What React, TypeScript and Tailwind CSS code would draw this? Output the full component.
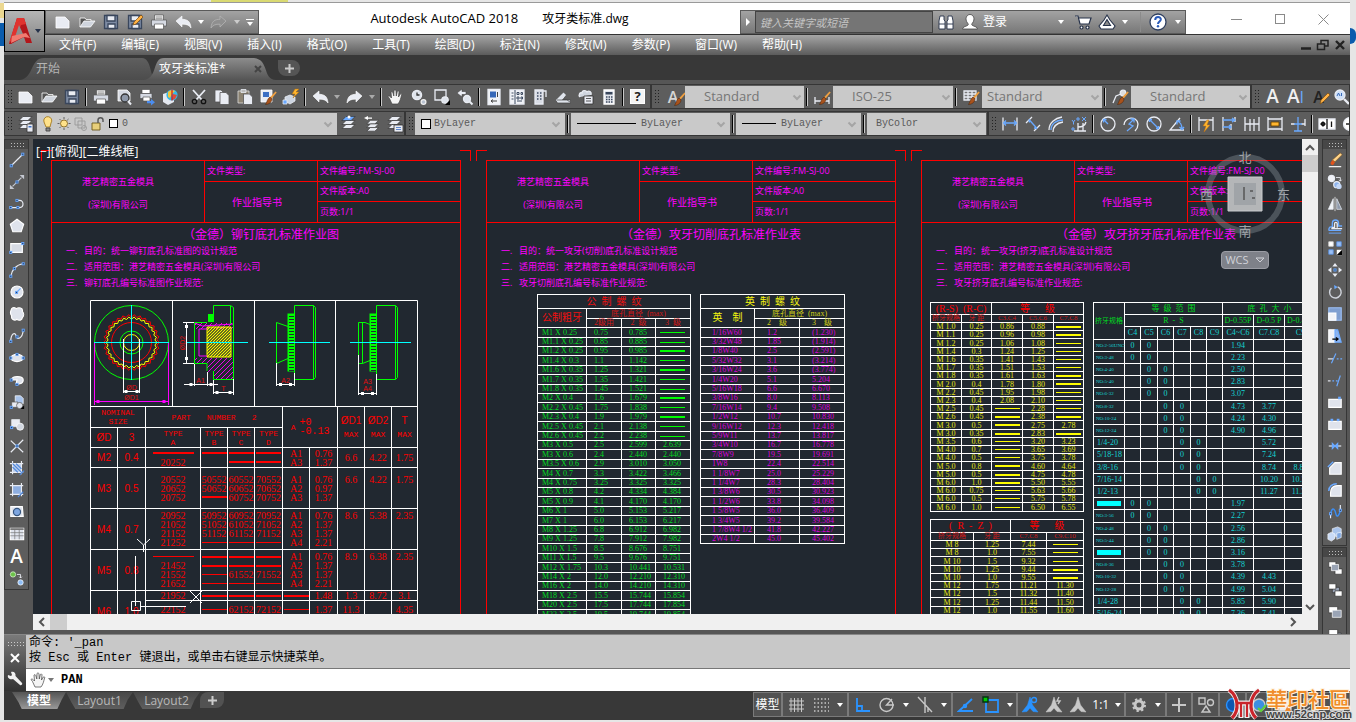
import React from 'react';

const UI = "font-['Open_Sans','Noto_Sans_CJK_SC',sans-serif]";
const CAD = "font-['Liberation_Serif','Noto_Sans_CJK_SC',serif]";

/* ---------- icons ---------- */

const BLUE = '#6aa9ff';
const LIGHT = '#e9ecf3';

const Ico: React.FC<{ children: React.ReactNode; size?: string }> = ({ children, size = 'h-[18px] w-[18px]' }) => (
  <svg viewBox="0 0 18 18" className={`${size} shrink-0`} fill="none" stroke={LIGHT} strokeWidth="1.3" aria-hidden="true">
    {children}
  </svg>
);

const Dot = ({ x, y }: { x: number; y: number }) => (
  <rect x={x - 1.2} y={y - 1.2} width="2.4" height="2.4" fill="#1f3b66" stroke={BLUE} strokeWidth="1" />
);

const Brush = () => (
  <g stroke="none">
    <path d="M16.5 3.5l1.2 1-5 6-1.6-1.2z" fill="#f0a040" />
    <path d="M11 9l2 1.8c0 3-2.500 5.500-6.500 5.700 1.500-2 1.500-5.500 4.500-7.500z" fill="#a8521c" stroke="#4a2208" strokeWidth=".5" />
  </g>
);

const Sheets = () => (
  <g fill={LIGHT} stroke="#333" strokeWidth=".7">
    <path d="M6 1.500h9l-4 4H2z" />
    <path d="M6 5.500h9l-4 4H2z" />
    <path d="M6 9.500h9l-4 4H2z" />
  </g>
);

const icons = {
  newFile: <path d="M2 4h9l4 4v7H2z" fill={LIGHT} stroke="#fff" strokeWidth=".8" />,
  open: (
    <g fill="#cfd4dd" stroke="#fff" strokeWidth=".8">
      <path d="M2 14V5h5l1 1.500h5V9" fill="#555" />
      <path d="M2 14l4-6h11l-4.500 6z" />
    </g>
  ),
  save: (
    <g stroke="#39465c">
      <path d="M2.500 2.500h13v13h-13z" fill="#7d8ba3" />
      <path d="M5 2.500h8V8H5z" fill={LIGHT} />
      <path d="M6 11h7v4.500H6z" fill={LIGHT} />
    </g>
  ),
  saveAs: (
    <g stroke="#39465c">
      <path d="M2.500 2.500h13v13h-13z" fill="#7d8ba3" />
      <path d="M5 2.500h8V8H5z" fill={LIGHT} />
      <path d="M6 11h7v4.500H6z" fill={LIGHT} />
      <path d="M7 12l1-3 7-7 2 2-7 7z" fill="#ffb347" stroke="#7a4a10" strokeWidth=".7" />
    </g>
  ),
  print: (
    <g stroke="#555" strokeWidth=".7">
      <path d="M4.500 2h9v6h-9z" fill="#fff" />
      <path d="M1.500 7h15v6h-15z" fill="#d5d9e2" />
      <path d="M4.500 11h9v5h-9z" fill="#fff" />
      <path d="M5.500 4h7M5.500 5.800h7" />
    </g>
  ),
  preview: (
    <g>
      <path d="M3 2h9l3 3v8H3z" fill="#d5d9e2" stroke="#fff" strokeWidth=".8" />
      <circle cx="10" cy="10" r="4" fill="#8d97a8" stroke="#333" />
      <path d="M13 13l3 3.500" strokeWidth="2" />
    </g>
  ),
  publish: (
    <g stroke="#555" strokeWidth=".7">
      <path d="M4 1.500h8v4H4z" fill="#fff" />
      <path d="M2 5.500h12v5H2z" fill="#d5d9e2" />
      <path d="M5 9h7v4H5z" fill="#fff" />
      <path d="M9 13h4v-2l4 3.300-4 3.200v-2.200H9z" fill="#4b8df0" stroke="none" />
    </g>
  ),
  globe: (
    <g stroke="none">
      <path d="M2 6l6-2 5 2v8l-6 3-5-3z" fill="#e4e8f0" />
      <circle cx="11" cy="7" r="5.600" fill="#35b8e8" />
      <path d="M7 4c2-2 5-2 7-1l-3 3-2 4-2-1z" fill="#f2c53d" />
      <path d="M12 6l4 1-2 4-3 1z" fill="#e04a3a" />
      <path d="M11 1.500v11" stroke="#d02020" />
    </g>
  ),
  cut: (
    <g>
      <path d="M3 2l9 10M15 2L6 12" strokeWidth="1.800" />
      <circle cx="4.500" cy="13.500" r="2.200" stroke="#111" />
      <circle cx="13.500" cy="13.500" r="2.200" stroke="#111" />
    </g>
  ),
  copy: (
    <g fill={LIGHT} stroke="#555" strokeWidth=".8">
      <path d="M2 2h6l3 3v9H2z" />
      <path d="M7 4.500h6l3 3v9H7z" />
    </g>
  ),
  paste: (
    <g strokeWidth=".8">
      <path d="M2 3h11v12H2z" fill="#8b8271" stroke="#ddd" />
      <path d="M5 1.500h5v3H5z" fill="#bbb" />
      <path d="M7.500 6h6l3 3v7.500h-9z" fill={LIGHT} stroke="#555" />
    </g>
  ),
  match: (
    <g>
      <path d="M2 2h11v12H2z" fill={LIGHT} stroke="#fff" strokeWidth=".8" />
      <path d="M4 4h6v5H4z" fill="#3c6fc4" stroke="none" />
      <Brush />
    </g>
  ),
  block: (
    <g strokeWidth=".8">
      <path d="M3 9l5-2 5 2v4l-5 3-5-3z" fill="#cdd5e2" />
      <path d="M1 12h4v4H1z" fill={BLUE} />
      <path d="M13 1l-3 5h3l-2 4 6-6h-3l3-3z" fill="#ffb52e" stroke="#a86a10" strokeWidth=".5" />
    </g>
  ),
  undo: <path d="M2 8l6-5v3.300c5 0 8.500 1.700 9 8.700-2-3-4.500-4-9-3.800V14z" fill={LIGHT} stroke="#fff" strokeWidth=".6" />,
  redo: <path d="M16 8l-6-5v3.300C5 6.300 1.500 8 1 15c2-3 4.500-4 9-3.800V14z" fill={LIGHT} stroke="#fff" strokeWidth=".6" />,
  redoOff: <path d="M16 8l-6-5v3.300C5 6.300 1.500 8 1 15c2-3 4.500-4 9-3.800V14z" fill="#8f8f8f" stroke="#b4b4b4" strokeWidth=".8" />,
  hand: (
    <path
      d="M5 16L2.500 10.500 1 8.500c1-1 2-.2 3.500 1.500L4 4c1-.8 1.600 0 2 1l.8 3L7 2.500c1-1 1.800-.5 2 .5l.3 5 1-4.500c.9-.9 1.800-.4 1.700.6L11.500 9l1.800-3c1-.5 1.700 0 1.300 1-.8 3-1.500 6.500-3.600 9z"
      fill="#f4f4f4"
      stroke="#444"
      strokeWidth=".7"
    />
  ),
  zoomRt: (
    <g>
      <circle cx="7" cy="7" r="4.600" fill="#dfe4ec" />
      <path d="M7 4.500V7h2.500" stroke="#333" />
      <circle cx="13.500" cy="14" r="2.400" fill="#b9c2d0" stroke="#eee" />
    </g>
  ),
  zoomWin: (
    <g>
      <path d="M2 2h11v10H2z" />
      <circle cx="12" cy="12" r="3.200" fill="#dfe4ec" />
      <path d="M17 12v5h-5z" fill="#000" stroke="none" />
    </g>
  ),
  zoomPrev: (
    <g>
      <path d="M1 5l5-4v2.500h4v3H6V9z" fill={LIGHT} stroke="#444" strokeWidth=".6" />
      <circle cx="11" cy="11" r="3.500" fill="#dfe4ec" />
      <path d="M13.500 13.500l3 3" strokeWidth="2" />
    </g>
  ),
  props: (
    <g>
      <path d="M3 1.500h12v15H3z" fill="#f1f3f7" />
      <path d="M5 3.500h6v6H5z" fill="#3668b8" stroke="none" />
      <path d="M12.500 4v5M6 13h6M6 13l2-1.500M6 13l2 1.500" stroke="#444" strokeWidth="1" />
    </g>
  ),
  design: (
    <g>
      <path d="M2 2h14v14H2z" fill="#f1f3f7" />
      <path d="M7 2v14M9 4.500h2v2H9zM13 4.500h1.500v2H13zM9 9h2v2H9zM13 9h1.500v2H13zM9 13h5M3.500 5h2M3.500 8h2M3.500 11h2" stroke="#3d4a61" strokeWidth="1" />
    </g>
  ),
  palette: (
    <g>
      <path d="M4 2h8v14H4z" fill="#d8dce5" />
      <path d="M6 5h1.500M9 5h1.500M6 8h1.500M9 8h1.500M6 11h1.500M9 11h1.500" stroke="#3d4a61" />
      <path d="M12 3h3v6" />
    </g>
  ),
  sheetSet: (
    <g fill="#dfe4ec" stroke="#444" strokeWidth=".7">
      <path d="M1.500 12l8-8 3 3-4 5h8v3h-13z" />
      <path d="M3 12h10l3 2" />
    </g>
  ),
  markup: (
    <g>
      <path d="M3 9c-2-2 0-5 2-4 0-3 4-3 5-1 2-2 5 0 4 3" fill="#cfd5df" />
      <path d="M7 8h9v8H7z" fill={LIGHT} stroke="#333" strokeWidth=".8" />
      <path d="M9 10.500h5M9 13h5" stroke="#333" strokeWidth=".8" />
    </g>
  ),
  calc: (
    <g>
      <path d="M4 2h10v14H4z" fill="#e4e7ee" stroke="#fff" />
      <path d="M5.500 4h7v2.500h-7z" fill="#39465c" stroke="none" />
      <path d="M6 9h1.500M8.500 9H10M11 9h1.500M6 11.500h1.500M8.500 11.500H10M11 11.500h1.500M6 14h1.500M8.500 14H10M11 14h1.500" stroke="#39465c" />
    </g>
  ),
  dim: (
    <g>
      <path d="M2 2.500v13M16 2.500v13" />
      <path d="M2.500 8h13M5 5.500L2.500 8 5 10.500M13 5.500L15.500 8 13 10.500" stroke={BLUE} />
    </g>
  ),
  dimBrush: (
    <g>
      <path d="M2 9v7M16 9v7M2 13h14" />
      <Brush />
    </g>
  ),
  tableBrush: (
    <g>
      <path d="M2 3h12v9H2zM2 6h12M2 9h12M6 3v9M10 3v9" fill="#777" />
      <Brush />
    </g>
  ),
  leaderBrush: (
    <g>
      <circle cx="12" cy="5" r="2.800" fill="#ddd" />
      <path d="M2 15l3-7 5-2" />
      <Brush />
    </g>
  ),
  aligned: (
    <g>
      <path d="M2 8l6-6M10 16l6-6" />
      <path d="M5 4.500l8 9M5 4.500l.5 3M13 13.500l-3-.5" stroke={BLUE} />
    </g>
  ),
  arcLen: (
    <g>
      <path d="M2 15C2 8 8 3 15 2M6 17C6 11 10 8 16 7" />
      <path d="M4 15c0-6 5-10 12-10" stroke={BLUE} />
    </g>
  ),
  ordinate: (
    <g>
      <path d="M8 8v8M8 12c4 0 7-1 8-5M4 16h12M13 8v8" />
      <path d="M2 5l1.500 2L5 5M3.500 7v2.500M12 2l4 4M16 2l-4 4M7 3h2v2H7zM2 13h2v2H2z" stroke={BLUE} strokeWidth="1" />
    </g>
  ),
  radius: (
    <g>
      <circle cx="9" cy="9" r="7" />
      <path d="M9 9L4.500 4.500M4.500 7.500v-3h3" stroke={BLUE} />
    </g>
  ),
  jogged: (
    <g>
      <path d="M2 10C2 2 15 0 16 9c0 3-1 5-3 7" />
      <path d="M5 16l6-5-4-2 5-5M8.500 4H12v3.500" stroke={BLUE} />
    </g>
  ),
  diameter: (
    <g>
      <circle cx="9" cy="9" r="7" />
      <path d="M4.500 4.500l9 9M4.500 7V4.500H7M13.500 11v2.500H11" stroke={BLUE} />
    </g>
  ),
  angular: (
    <g>
      <path d="M16 15H2L12 3" />
      <path d="M9 6c3 1 5 4 5 8M9 9.500V6h3.500M11.500 12l2.500 2.500 2-2.500" stroke={BLUE} />
    </g>
  ),
  quick: (
    <g>
      <path d="M2 2v14M16 2v14M2 5h14" />
      <path d="M10 5L6 11h3l-2 6 6-7h-3l2-5z" fill="#ffb52e" stroke="#c07010" strokeWidth=".5" />
    </g>
  ),
  baseline: (
    <g>
      <path d="M3 2v14M15 2v5M11 9v6" />
      <path d="M3 5h12M3 12h8M12 3l3 2-3 2M9 10l2 2-2 2" stroke={BLUE} />
    </g>
  ),
  contin: <path d="M2 2v14M7 4v12M11 4v12M16 2v14M2 9h14" />,
  space: (
    <g>
      <path d="M2 2v14M16 2v14M2 4h14M2 14h14" />
      <path d="M5 7h8v4H5z" fill="#ffb52e" stroke="#5a3a00" strokeWidth=".8" />
    </g>
  ),
  breakDim: (
    <g>
      <path d="M2 9h4M12 9h4M16 4v7" />
      <path d="M9 2v14M5 16h8M5 9h8" stroke={BLUE} />
    </g>
  ),
  tol: (
    <g>
      <path d="M1 4h16v10H1z" fill="#fff" />
      <path d="M9 4v10M2.500 9h5M5 6.500v5M13.500 6.500V12" stroke="#111" />
      <circle cx="5" cy="9" r="1.600" stroke="#111" />
    </g>
  ),
  center: (
    <g>
      <circle cx="9" cy="9" r="6.500" fill="#fff" />
      <path d="M9 5v8M5 9h8" stroke="#222" />
    </g>
  ),
  layers: (
    <g>
      <Sheets />
      <path d="M10 9h6v8h-6z" fill={LIGHT} stroke="#333" strokeWidth=".8" />
      <path d="M11.500 11h3v1.500h-3z" fill="#3c6fc4" stroke="none" />
    </g>
  ),
  layerIso: (
    <g>
      <Sheets />
      <path d="M6 1.500h9l-4 4H2z" fill={BLUE} stroke="#333" strokeWidth=".6" />
      <circle cx="9" cy="2" r="1.500" fill="#fff" stroke="none" />
    </g>
  ),
  layerPrev: (
    <g>
      <g transform="translate(2 4) scale(.9)">
        <Sheets />
      </g>
      <path d="M1 3l4-2v1.500h4v1.300H5V5z" fill="#fff" stroke="none" />
    </g>
  ),
  layerState: (
    <g>
      <Sheets />
      <path d="M8 10h9v7H8z" fill={LIGHT} stroke="#333" strokeWidth=".8" />
      <path d="M10 12.500h5M10 14.500h5" stroke="#3c6fc4" strokeWidth=".8" />
    </g>
  ),
  find: (
    <g>
      <circle cx="7" cy="7" r="5" fill="#cfe0f7" />
      <path d="M11 11l5 5" strokeWidth="2.400" />
      <path d="M4 8l1.500-3L7 8M8.500 5v3" stroke="#3668b8" strokeWidth="1" />
    </g>
  ),
  line: (
    <g>
      <path d="M2.500 15.500l13-13" />
      <Dot x={2.5} y={15.5} />
      <Dot x={15.5} y={2.5} />
    </g>
  ),
  xline: (
    <g>
      <path d="M4 14L14 4" stroke="#c5c9d2" />
      <path d="M1 12v5h5zM12 1h5v5z" fill="#c5c9d2" stroke="none" />
      <Dot x={9} y={9} />
    </g>
  ),
  pline: (
    <g>
      <path d="M2 13h10c5 0 5-8 0-8H9" />
      <Dot x={2} y={13} />
      <Dot x={9} y={5} />
      <Dot x={10} y={13} />
    </g>
  ),
  polygon: <path d="M9 1.500L16.500 7l-2.800 8.500H4.300L1.500 7z" fill="#dfe3ec" stroke="#fff" />,
  rect: (
    <g>
      <path d="M2 4h13v10H2z" fill="#d7dbe4" stroke="#fff" />
      <Dot x={2} y={14} />
      <Dot x={15.5} y={4} />
    </g>
  ),
  arc: (
    <g>
      <path d="M2 16C3 9 8 3 16 2" />
      <Dot x={2} y={16} />
      <Dot x={6} y={7.5} />
      <Dot x={16} y={2} />
    </g>
  ),
  circle: (
    <g>
      <circle cx="9" cy="9" r="6.800" fill="#dfe3ec" stroke="#fff" />
      <path d="M9 9l4-4" stroke={BLUE} />
      <Dot x={8.5} y={9.5} />
    </g>
  ),
  cloud: <path d="M3 3c2-2 4-1 5 0 3-2 8-1 7 3 2 2 2 5 0 7 0 3-4 4-6 2-3 2-7 0-6-4-2-2-1-6 0-8z" fill="#dfe3ec" stroke="#fff" />,
  spline: (
    <g>
      <path d="M2 15c0-9 5-11 6-6s7 3 8-6" />
      <Dot x={2} y={15} />
      <Dot x={9} y={10} />
      <Dot x={16} y={2.5} />
    </g>
  ),
  ellipse: (
    <g>
      <ellipse cx="9" cy="9" rx="7" ry="4" fill="#dfe3ec" stroke="#fff" />
      <Dot x={2} y={9} />
      <Dot x={16} y={9} />
      <Dot x={9} y={5} />
    </g>
  ),
  ellArc: (
    <g>
      <path d="M3 9c0-5 13-5 13 0s-7 5-8 4l1-4z" fill="#dfe3ec" stroke="#fff" />
      <Dot x={2.5} y={9} />
      <Dot x={9} y={14} />
    </g>
  ),
  insert: (
    <g strokeWidth=".8">
      <path d="M7 2h6l3 3v6H7z" fill="#a9c4ec" stroke="#fff" />
      <path d="M3 9h7v6H3z" fill={LIGHT} stroke="#555" />
      <circle cx="12" cy="13" r="3.500" fill="#dfe3ec" stroke="#555" />
      <path d="M17 13v4h-4z" fill="#000" stroke="none" />
      <Dot x={2.5} y={15} />
    </g>
  ),
  mkBlock: (
    <g strokeWidth=".8">
      <path d="M3 4h9v8H3z" fill={LIGHT} />
      <circle cx="12.500" cy="12" r="4" fill="#d2d7e0" stroke="#fff" />
      <Dot x={3} y={13} />
    </g>
  ),
  point: (
    <g>
      <path d="M2 3l14 13M16 2L2 16" />
      <Dot x={9} y={9} />
    </g>
  ),
  hatch: (
    <g>
      <path d="M4 4h10v10H4z" fill="#b9cdec" stroke="none" />
      <path d="M4 1v15M14 1v15M1 4h15M1 14h15" />
      <path d="M4 8l6 6M4 4l10 10M8 4l6 6M12 17l5-5" stroke="#4d86dc" />
    </g>
  ),
  gradient: (
    <g>
      <path d="M4 4h10v10H4z" fill="#8eaee0" stroke="none" />
      <path d="M4 1v15M14 1v15M1 4h15M1 14h15" />
      <path d="M10 17l6-6" stroke="#4d86dc" />
    </g>
  ),
  region: (
    <g>
      <path d="M2 3h13l1 11H2z" fill="#dfe3ec" stroke="#fff" />
      <circle cx="9" cy="9" r="4" fill="#7ea6e0" stroke="#35557f" />
    </g>
  ),
  table: (
    <g>
      <path d="M1.500 2.500h15v13h-15z" fill="#dfe3ec" stroke="#fff" />
      <path d="M1.500 3.500h15" stroke="#777" strokeWidth="2" />
      <path d="M1.500 7.500h15M1.500 11h15M6.500 4v11M11.500 4v11" stroke="#777" strokeWidth=".8" />
    </g>
  ),
  addSel: (
    <g>
      <circle cx="4.500" cy="5" r="3" fill="#6cc24a" stroke="#e0f5d5" strokeWidth=".8" />
      <path d="M9 5h4v4M11.500 7.500L13 9l1.500-1.500" strokeWidth="1" />
      <circle cx="13" cy="14" r="3" fill="#8ebdf5" stroke="#fff" strokeWidth=".8" />
    </g>
  ),
  erase: (
    <g>
      <path d="M2 16.500h14" stroke="#fff" />
      <path d="M15 1l2 2-8 8-3-2z" fill="#ffd58a" stroke="#8a5a20" strokeWidth=".7" />
      <path d="M6 9l3 2.500-2 3c-2 .5-3-.5-3-2z" fill="#e2541c" stroke="none" />
    </g>
  ),
  copyObj: (
    <g>
      <circle cx="5" cy="5" r="3.500" fill="#f1f3f7" />
      <path d="M10 4h5v4M13.500 6.500L15 8l1.500-1.500" strokeWidth="1" />
      <circle cx="11" cy="12" r="3.500" fill="#8eb4ee" />
      <circle cx="13.500" cy="14" r="3" fill="#c3d7f7" stroke="none" />
    </g>
  ),
  mirror: (
    <g strokeWidth=".8">
      <path d="M7 3v12H1.500z" fill="#f1f3f7" />
      <path d="M11 3v12h5.500z" fill="#8e99ab" />
      <path d="M9 1v16" stroke="#fff" />
    </g>
  ),
  offset: (
    <g strokeWidth="1.500">
      <path d="M2 14h14M2 14c0-5 3-4 4-4V6c0-5 7-5 7 0v3h4" stroke={BLUE} />
      <path d="M5 12h12M5 12c1-2 2-1 3.500-1.500V6.500c0-2 3-2 3 0V11" />
      <path d="M2 17h14" stroke={BLUE} strokeWidth="1" />
    </g>
  ),
  array: (
    <g strokeWidth=".9">
      <path d="M2 2h5v5H2z" fill="#fff" stroke="#ddd" />
      <path d="M11 2h5v5h-5zM2 11h5v5H2z" fill="#9cc0f5" stroke="#5a95ea" />
      <path d="M11 11h6v6h-6z" fill="#fff" stroke="none" />
      <path d="M17 11v6h-6z" fill="#000" stroke="none" />
    </g>
  ),
  move: (
    <g>
      <path d="M9 1l3 4H6zM9 17l3-4H6zM1 9l4-3v6zM17 9l-4-3v6z" fill={LIGHT} stroke="none" />
      <Dot x={9} y={9} />
    </g>
  ),
  rotate: (
    <g>
      <path d="M5 4.500a6.500 6.500 0 1 0 7-1.200" stroke="#d0d4dc" strokeWidth="1.600" />
      <path d="M8 1l4 2.300L8.500 6z" fill={BLUE} stroke="none" />
    </g>
  ),
  scale: (
    <g>
      <path d="M2 2h14v14H2z" fill="#7f9fd0" stroke="#9cc0f5" />
      <path d="M2 8h8v8H2z" fill="#f1f3f7" stroke="#fff" />
    </g>
  ),
  stretch: (
    <g>
      <path d="M2 2h7v14H2z" fill="#f1f3f7" stroke="#fff" />
      <path d="M9 2h3l4 14H9z" fill="#8eb4ee" stroke={BLUE} />
      <path d="M6 12.500h6M10 10.500l2.500 2L10 14.500" stroke="#000" />
    </g>
  ),
  trim: (
    <g>
      <path d="M1 10h6" />
      <path d="M5 15l5-11M11 10h2M15 10h2" stroke={BLUE} />
    </g>
  ),
  extend: (
    <g>
      <path d="M1 10h3" />
      <path d="M6 10h2M10 10h2M11 16l4-12" stroke={BLUE} />
    </g>
  ),
  breakPt: (
    <g>
      <path d="M2 6h14v9H2z" fill="#dfe3ec" stroke="#fff" />
      <path d="M12.500 3h3v3h-3z" fill={BLUE} stroke="none" />
    </g>
  ),
  breakObj: (
    <g>
      <path d="M2 6h14v9H2z" fill="#dfe3ec" stroke="#fff" />
      <path d="M4 3h3v3H4zM11 3h3v3h-3z" fill={BLUE} stroke="none" />
    </g>
  ),
  join: (
    <g>
      <path d="M2 9h14" />
      <path d="M6 6l3 3-3 3zM12 6L9 9l3 3z" fill={BLUE} stroke={BLUE} />
    </g>
  ),
  chamfer: (
    <g>
      <path d="M3 16V9l6-6h7v13z" fill="#dfe3ec" stroke="#fff" />
      <path d="M1 8l6-6" stroke={BLUE} strokeWidth="1.600" />
    </g>
  ),
  fillet: (
    <g>
      <path d="M4 16v-4c0-5 3-8 8-8h4v12z" fill="#dfe3ec" stroke="#fff" />
      <path d="M2 10c0-5 4-8 9-8" stroke={BLUE} strokeWidth="1.600" />
    </g>
  ),
  blend: (
    <g>
      <path d="M4 10v6M15 1v8" />
      <path d="M4 11c2-9 5-5 6 0s4 2 5-4" stroke="#3b8ef5" strokeWidth="1.600" />
      <Dot x={4} y={11} />
      <Dot x={15} y={7} />
    </g>
  ),
  explode: (
    <g strokeWidth=".7">
      <path d="M6 3l6-2 4 2v6l-5 3-5-2z" fill="#a9c4ec" stroke="#fff" />
      <path d="M1 9l4-2 4 2v5l-4 3-4-2z" fill="#c9daf5" stroke="#fff" />
      <path d="M11 8l5-1v6l-5 2z" fill="#7ea6e0" stroke="#fff" />
    </g>
  ),
  order1: (
    <g stroke="#333" strokeWidth=".8">
      <path d="M2 2h8v6H2zM9 10h8v6H9z" fill="#fff" />
      <path d="M5 5h8v7H5z" fill="#9aa4b5" stroke="#fff" />
    </g>
  ),
  order2: (
    <g stroke="#333" strokeWidth=".8">
      <path d="M6 6h8v6H6z" fill="#9aa4b5" />
      <path d="M2 2h8v6H2zM9 10h8v6H9z" fill="#fff" />
    </g>
  ),
  order3: (
    <g stroke="#333" strokeWidth=".8">
      <path d="M2 3h10v7H2z" fill="#fff" />
      <path d="M6 7h10v8H6z" fill="#9aa4b5" stroke="#fff" />
    </g>
  ),
  order4: (
    <g stroke="#333" strokeWidth=".8">
      <path d="M6 8h10v8H6z" fill="#9aa4b5" />
      <path d="M2 4h10v8H2z" fill="#fff" />
    </g>
  ),
  binoc: (
    <g fill="#fff" stroke="#26324a" strokeWidth=".9">
      <path d="M3 3h4v4l1 1v8H2V8zM15 3h-4v4l-1 1v8h6V8z" />
      <path d="M2 11h6M10 11h6" />
    </g>
  ),
  user: (
    <g fill="#fff" stroke="#444" strokeWidth=".8">
      <path d="M1.500 16c0-2 3-2.500 5-3.500 1-.5 1-1.500 0-2.500-3-4-1-8.500 2.500-8.500S14.500 6 11.500 10c-1 1-1 2 0 2.500 2 1 5 1.500 5 3.500z" />
    </g>
  ),
  cart: (
    <g stroke="#26324a" strokeWidth="1.200">
      <path d="M1 3h3l2 8h9l2-6H5" fill="#fff" />
      <circle cx="7.500" cy="14.500" r="1.500" fill="#fff" />
      <circle cx="13.500" cy="14.500" r="1.500" fill="#fff" />
    </g>
  ),
  a360: (
    <g stroke="#26324a" strokeWidth="1.100" fill="#fff">
      <path d="M9 2l3 5 5 6-2 3H3l-2-3 5-6z" />
      <path d="M9 6.500l3.500 6h-7z" fill="#888" />
    </g>
  ),
  help: (
    <g>
      <circle cx="9" cy="9" r="8" fill="#fff" stroke="#2f3f5f" />
      <path d="M6.200 7c0-4 6-3.700 5.600-.3C11.500 8.500 9 8.600 9 11" stroke="#2a5ab8" strokeWidth="2" />
      <circle cx="9" cy="13.300" r="1.200" fill="#2a5ab8" stroke="none" />
    </g>
  ),
};

type IconName = keyof typeof icons;

const Tool = ({ name, label }: { name: IconName; label?: string }) => (
  <button type="button" aria-label={label ?? name} className="flex h-full w-[23px] shrink-0 items-center justify-center">
    <Ico>{icons[name]}</Ico>
  </button>
);

const Tri = ({ color = 'border-t-white' }: { color?: string }) => (
  <span className={`h-0 w-0 shrink-0 border-x-[3px] border-t-4 border-x-transparent ${color}`} />
);

const Chevron = ({ d, className }: { d: string; className?: string }) => (
  <svg viewBox="0 0 10 10" className={`h-2.5 w-2.5 ${className ?? ''}`} fill="none" stroke="currentColor" strokeWidth="2" aria-hidden="true">
    <path d={d} />
  </svg>
);

const Sep = () => <span className="mx-0.5 h-[18px] w-0.5 shrink-0 border-r border-[#c8c8c8] bg-black" />;
const Drop = () => (
  <button type="button" aria-label="more" className="flex w-3 shrink-0 items-center justify-center">
    <Tri color="border-t-[#aaa]" />
  </button>
);
const Grip = () => (
  <span className="mr-px h-4 w-[6px] shrink-0 bg-[radial-gradient(#222_1px,transparent_1px)] bg-[size:3px_3px]" />
);

const Bar: React.FC<{ children: React.ReactNode; className?: string }> = ({ children, className = '' }) => (
  <div role="toolbar" className={`flex h-[25px] shrink-0 items-center border border-[#363636] bg-[#5d5d5d] ${className}`}>
    {children}
  </div>
);

/* ---------- top of the window ---------- */

const TitleBar = () => (
  <div className="flex h-[31px] items-end bg-white pl-[41px]">
    <div className="flex h-6 w-[214px] shrink-0 items-center justify-between border border-[#5a5a5a] bg-linear-to-b from-[#a3a3a3] to-[#787878] pr-1 pl-2">
      {(['newFile', 'open', 'save', 'saveAs', 'print', 'undo'] as IconName[]).map((n) => (
        <button key={n} type="button" aria-label={n}>
          <Ico>{icons[n]}</Ico>
        </button>
      ))}
      <Tri />
      <button type="button" aria-label="redo">
        <Ico>{icons.redoOff}</Ico>
      </button>
      <Tri color="border-t-[#ccc]" />
      <span className="flex flex-col items-center gap-0.5">
        <span className="h-px w-2 bg-white" />
        <Tri />
      </span>
    </div>
    <h1 className="flex h-full flex-1 items-center justify-center gap-6 text-[12px] text-black">
      <span className="text-[13px]">Autodesk AutoCAD 2018</span>
      <span>攻牙类标准.dwg</span>
    </h1>
    <div className="flex h-6 w-[446px] shrink-0 items-center border border-[#5a5a5a] bg-linear-to-b from-[#a3a3a3] to-[#787878] text-[12px] text-white">
      <button type="button" aria-label="collapse search" className="flex w-[14px] justify-center">
        <span className="h-0 w-0 border-y-4 border-l-4 border-y-transparent border-l-white" />
      </button>
      <input
        aria-label="搜索"
        placeholder="键入关键字或短语"
        className="h-[22px] w-[178px] border border-[#444] bg-[#757575] px-1 text-[11px] italic placeholder:text-[#c4c4c4]"
      />
      <button type="button" aria-label="find" className="ml-1">
        <Ico>{icons.binoc}</Ico>
      </button>
      <button type="button" className="ml-1.5 flex items-center gap-1">
        <Ico>{icons.user}</Ico>
        登录
      </button>
      <span className="ml-auto flex items-center">
        <Tri />
        <button type="button" aria-label="store" className="ml-2.5">
          <Ico>{icons.cart}</Ico>
        </button>
        <button type="button" aria-label="A360" className="mx-1.5">
          <Ico>{icons.a360}</Ico>
        </button>
        <Tri />
        <span className="mr-2 ml-3 h-5 w-px bg-[#8b8b8b]" />
        <button type="button" aria-label="help" className="mr-2">
          <Ico>{icons.help}</Ico>
        </button>
        <Tri />
        <span className="w-1" />
      </span>
    </div>
    <div className="flex h-full w-[164px] shrink-0 items-center justify-around pt-px pr-1 pl-7 text-[#8a8a8a]">
      <button type="button" aria-label="minimize" className="h-px w-[11px] bg-[#8a8a8a]" />
      <button type="button" aria-label="maximize" className="h-[10px] w-[10px] border border-[#8a8a8a]" />
      <button type="button" aria-label="close">
        <svg viewBox="0 0 11 11" className="h-[11px] w-[11px]" stroke="currentColor" aria-hidden="true">
          <path d="M.5.5l10 10M10.500.5l-10 10" />
        </svg>
      </button>
    </div>
  </div>
);

const menus = ['文件(F)', '编辑(E)', '视图(V)', '插入(I)', '格式(O)', '工具(T)', '绘图(D)', '标注(N)', '修改(M)', '参数(P)', '窗口(W)', '帮助(H)'];

const MenuBar = () => (
  <nav className="flex h-[21px] items-center gap-[25px] border-t border-[#333] bg-linear-to-b from-[#a6a6a6] to-[#5c5c5c] pr-[5px] pl-[55px] text-[12px] text-white">
    {menus.map((m) => (
      <button key={m} type="button" className="shrink-0">
        {m}
      </button>
    ))}
    <span className="ml-auto flex items-center gap-1.5">
      <svg viewBox="0 0 28 12" className="h-3 w-7" fill="none" stroke="#222" strokeWidth="1.500" aria-hidden="true">
        <path d="M0 9.500h10" strokeWidth="2.500" />
        <path d="M16.500 5h7v5.500h-7zM20 5V1.500h7V7h-3" />
      </svg>
      <svg viewBox="0 0 10 10" className="h-2.5 w-2.5" stroke="#222" strokeWidth="2.400" aria-hidden="true">
        <path d="M1 1l8 8M9 1L1 9" />
      </svg>
    </span>
  </nav>
);

const AppButton = () => (
  <button
    type="button"
    aria-label="AutoCAD"
    className="absolute top-[7px] left-0 flex h-[42px] w-[41px] items-center gap-0.5 border border-black bg-linear-to-b from-[#b5b5b5] to-[#7b7b7b] pl-1"
  >
    <svg viewBox="0 0 24 28" className="h-7 w-6" aria-hidden="true">
      <path d="M8 1h7l8 25h-6l-2-6-13 7H0z" fill="#b3161b" />
      <path d="M8 1h7l2 6-5 1-4 10-8 8z" fill="#e0332f" />
      <path d="M10 8l4 9-8 3z" fill="#8e8e8e" />
      <path d="M3 19l14-3 4 5-6-1-13 6z" fill="#f07a70" />
    </svg>
    <Tri color="border-t-[#26324a]" />
  </button>
);

const FileTabs = () => (
  <div className="flex h-[25px] items-end bg-[#383838] pl-4 text-[12px]">
    <button
      type="button"
      className="h-[22px] w-[136px] bg-linear-to-b from-[#5f5f5f] to-[#4c4c4c] pl-4 text-left text-[#b4b4b4] [clip-path:path('M0_22C14_20_10_0_24_0H122C132_0_130_22_136_22Z')]"
    >
      开始
    </button>
    <button
      type="button"
      className="-ml-3 flex h-[22px] w-[132px] items-center bg-linear-to-b from-[#8c8c8c] to-[#555] pl-[15px] text-white [clip-path:path('M0_22C14_20_8_0_20_0H108C126_0_118_22_132_22Z')]"
    >
      攻牙类标准*
      <svg viewBox="0 0 8 8" className="ml-7 h-2 w-2" stroke="#444" strokeWidth="2" aria-hidden="true">
        <path d="M1 1l6 6M7 1L1 7" />
      </svg>
    </button>
    <button type="button" aria-label="新图形" className="mb-1 ml-0.5 flex h-4 w-[22px] items-center justify-center rounded-tr-lg rounded-b-lg bg-[#555]">
      <svg viewBox="0 0 9 9" className="h-[9px] w-[9px]" stroke="#ccc" strokeWidth="2" aria-hidden="true">
        <path d="M4.500 0v9M0 4.500h9" />
      </svg>
    </button>
  </div>
);

const StyleSelect = ({ label, value, width, pad }: { label: string; value: string; width: string; pad: string }) => (
  <span className={`relative flex h-[22px] shrink-0 items-center bg-[#c9c9c9] ${width}`}>
    <select aria-label={label} defaultValue={value} className={`h-full w-full appearance-none text-[13px] text-[#757575] ${pad}`}>
      <option>{value}</option>
    </select>
    <Chevron d="M1.500 3.500L5 7l3.500-3.500" className="pointer-events-none absolute right-0.5 text-[#a5a5a5]" />
  </span>
);

const PropSelect = ({ label, value, width, pad, children }: { label: string; value: string; width: string; pad: string; children?: React.ReactNode }) => (
  <span className={`relative flex h-[22px] shrink-0 items-center bg-[#c9c9c9] ${width}`}>
    <select
      aria-label={label}
      defaultValue={value}
      className={`h-full w-full appearance-none font-['Liberation_Mono',monospace] text-[10px] text-[#5a5a5a] ${pad}`}
    >
      <option>{value}</option>
    </select>
    <span className="pointer-events-none absolute left-1.5 flex items-center">{children}</span>
    <Chevron d="M1.500 3.500L5 7l3.500-3.500" className="pointer-events-none absolute right-1 text-[#a5a5a5]" />
  </span>
);

const Letter: React.FC<{ children: React.ReactNode }> = ({ children }) => (
  <button type="button" className="flex w-[23px] shrink-0 items-center justify-center text-[19px] leading-none font-semibold text-[#f0f0f0]">
    {children}
  </button>
);

const Toolbars = () => (
  <div className="overflow-hidden bg-[#565656] pt-1">
    <div className="flex">
      <Bar className="w-[647px] pl-0.5">
        <Grip />
        <Tool name="newFile" />
        <Tool name="open" />
        <Tool name="save" />
        <Sep />
        <Tool name="print" />
        <Tool name="preview" />
        <Tool name="publish" />
        <Tool name="globe" />
        <Sep />
        <Tool name="cut" />
        <Tool name="copy" />
        <Tool name="paste" />
        <Tool name="match" />
        <Tool name="block" />
        <Sep />
        <Tool name="undo" />
        <Drop />
        <Tool name="redo" />
        <Drop />
        <Sep />
        <Tool name="hand" />
        <Tool name="zoomRt" />
        <Tool name="zoomWin" />
        <Tool name="zoomPrev" />
        <Sep />
        <Tool name="props" />
        <Tool name="design" />
        <Tool name="palette" />
        <Tool name="sheetSet" />
        <Tool name="markup" />
        <Tool name="calc" />
        <Sep />
        <button type="button" className="ml-1 flex h-[15px] w-[15px] items-center justify-center border border-white bg-[#f4f4f4] text-[13px] font-bold text-[#222]">
          ?
        </button>
      </Bar>
      <Bar className="w-[600px] pl-0.5">
        <Grip />
        <span className="relative flex w-6 shrink-0 justify-center text-[16px] leading-none font-semibold text-[#d5d5d5]">
          A
          <svg viewBox="0 0 18 18" className="absolute -right-px h-[18px] w-[18px]" aria-hidden="true">
            <Brush />
          </svg>
        </span>
        <StyleSelect label="文字样式" value="Standard" width="w-[119px]" pad="pl-[19px]" />
        <Sep />
        <Tool name="dimBrush" />
        <StyleSelect label="标注样式" value="ISO-25" width="w-[120px]" pad="pl-[19px]" />
        <Sep />
        <Tool name="tableBrush" />
        <StyleSelect label="表格样式" value="Standard" width="w-[120px]" pad="pl-[5px]" />
        <Sep />
        <Tool name="leaderBrush" />
        <StyleSelect label="引线样式" value="Standard" width="w-[119px]" pad="pl-[19px]" />
      </Bar>
      <Bar className="min-w-0 flex-1 shrink overflow-hidden pl-0.5">
        <Grip />
        <Letter>A</Letter>
        <Letter>
          A<span className="text-[16px] font-normal text-[#6aa9ff]">I</span>
        </Letter>
        <span className="relative flex w-[23px] shrink-0 justify-center text-[16px] leading-none font-semibold text-[#222]">
          A
          <svg viewBox="0 0 18 18" className="absolute -right-px h-[18px] w-[18px]" aria-hidden="true">
            <path d="M7 15l1-4 7-7 2 2-7 7z" fill="#ffb347" stroke="#7a4a10" strokeWidth=".7" />
          </svg>
        </span>
        <Tool name="find" />
      </Bar>
    </div>
    <div className="mt-0.5 flex pb-[3px]">
      <Bar className="w-[401px] pl-0.5">
        <Grip />
        <Tool name="layers" />
        <PropSelect label="图层" value="0" width="w-[300px]" pad="pl-[85px]">
          <svg viewBox="0 0 66 18" className="h-[18px] w-[66px]" fill="none" strokeWidth=".9" aria-hidden="true">
            <path d="M1 7a4 4 0 1 1 7 1L7 12H3z" fill="#ffe28a" stroke="#a57a20" />
            <path d="M3 13h4v3H3z" fill="#888" stroke="#444" />
            <circle cx="21" cy="8.500" r="3.500" fill="#ffe28a" stroke="#8a6a20" />
            <path d="M21 2v2M21 13v2M14.500 8.500h2M25.500 8.500h2M16.500 4l1.300 1.300M24.200 11.700l1.300 1.300M25.500 4l-1.300 1.300M17.800 11.700L16.500 13" stroke="#555" />
            <path d="M32 3h7v7h-7zM35 6h7v7h-7z" stroke="#999" />
            <circle cx="41" cy="13" r="2.500" stroke="#999" />
            <path d="M49 8h8v7h-8z" fill="#e8cf7a" stroke="#6d5a1c" />
            <path d="M55 8V5c0-3 5-3 5 0v2" stroke="#555" strokeWidth="1.400" />
          </svg>
          <span className="h-[9px] w-[9px] border border-black bg-white" />
        </PropSelect>
        <Tool name="layerIso" />
        <Tool name="layerPrev" />
        <Tool name="layerState" />
      </Bar>
      <Bar className="w-[583px] pl-0.5">
        <Grip />
        <PropSelect label="颜色" value="ByLayer" width="w-[150px]" pad="pl-[19px]">
          <span className="h-[10px] w-[10px] border border-black bg-white" />
        </PropSelect>
        <Sep />
        <PropSelect label="线型" value="ByLayer" width="w-[159px]" pad="pl-[70px]">
          <span className="h-px w-[59px] bg-black" />
        </PropSelect>
        <Sep />
        <PropSelect label="线宽" value="ByLayer" width="w-[125px]" pad="pl-[45px]">
          <span className="h-px w-[34px] bg-black" />
        </PropSelect>
        <Sep />
        <PropSelect label="打印样式" value="ByColor" width="w-[119px]" pad="pl-[9px]" />
      </Bar>
      <Bar className="min-w-0 flex-1 shrink overflow-hidden pl-0.5">
        <Grip />
        <Tool name="dim" />
        <Tool name="aligned" />
        <Tool name="arcLen" />
        <Tool name="ordinate" />
        <Sep />
        <Tool name="radius" />
        <Tool name="jogged" />
        <Tool name="diameter" />
        <Tool name="angular" />
        <Sep />
        <Tool name="quick" />
        <Tool name="baseline" />
        <Tool name="contin" />
        <Tool name="space" />
        <Tool name="breakDim" />
        <Sep />
        <Tool name="tol" />
        <Tool name="center" />
      </Bar>
    </div>
  </div>
);

/* ---------- side toolbars ---------- */

const drawTools: IconName[] = ['line', 'xline', 'pline', 'polygon', 'rect', 'arc', 'circle', 'cloud', 'spline', 'ellipse', 'ellArc', 'insert', 'mkBlock', 'point', 'hatch', 'gradient', 'region', 'table'];
const editTools: IconName[] = ['erase', 'copyObj', 'mirror', 'offset', 'array', 'move', 'rotate', 'scale', 'stretch', 'trim', 'extend', 'breakPt', 'breakObj', 'join', 'chamfer', 'fillet', 'blend', 'explode'];
const orderTools: IconName[] = ['order1', 'order2', 'order3', 'order4'];

const SideGrip = () => (
  <span className="flex h-[9px] shrink-0 items-center justify-center bg-[#474747]">
    <span className="h-[5px] w-[14px] bg-[radial-gradient(#bbb_1px,transparent_1px)] bg-[size:3px_3px]" />
  </span>
);

const SideTool = ({ name }: { name: IconName }) => (
  <button type="button" aria-label={name} className="flex h-[22px] shrink-0 items-center justify-center">
    <Ico size="h-4 w-4">{icons[name]}</Ico>
  </button>
);

/* ---------- drawing sheets ---------- */

// "-" is a thin rule and "=" a heavy one
const Val = ({ v, rule, w = 'w-[25px]' }: { v: string; rule: string; w?: string }) => {
  if (v === '-') return <span className={`mx-auto block h-px ${w} ${rule}`} />;
  if (v === '=') return <span className={`mx-auto block h-0.5 ${w} ${rule}`} />;
  return <>{v}</>;
};

const split = (s: string) => s.trim().split('\n').map((r) => r.trim().split('|'));

const Rows = ({ rows, rule, cell, first }: { rows: string[][]; rule: string; cell: string; first?: string }) => (
  <>
    {rows.map((r, i) => (
      <tr key={i}>
        {r.map((v, j) => (
          <td key={j} className={j === 0 ? first ?? cell : cell}>
            <Val v={v} rule={rule} />
          </td>
        ))}
      </tr>
    ))}
  </>
);

const TABLE = 'table-fixed border-collapse whitespace-nowrap text-[8px] leading-[8px] [&_td]:border [&_td]:border-white [&_td]:p-0 [&_th]:border [&_th]:border-white [&_th]:p-0 [&_th]:font-normal';

const metric = split(`
M1 X 0.25|0.75|0.785|-
M1.1 X 0.25|0.85|0.885|-
M1.2 X 0.25|0.95|0.985|=
M1.4 X 0.3|1.1|1.142|-
M1.6 X 0.35|1.25|1.321|=
M1.7 X 0.35|1.35|1.421|-
M1.8 X 0.35|1.45|1.521|-
M2 X 0.4|1.6|1.679|=
M2.2 X 0.45|1.75|1.838|-
M2.3 X 0.4|1.9|1.979|=
M2.5 X 0.45|2.1|2.138|-
M2.6 X 0.45|2.2|2.238|-
M3 X 0.5|2.5|2.599|2.639
M3 X 0.6|2.4|2.440|2.440
M3.5 X 0.6|2.9|3.010|3.050
M4 X 0.7|3.3|3.422|3.466
M4 X 0.75|3.25|3.325|3.325
M5 X 0.8|4.2|4.334|4.384
M5 X 0.9|4.1|4.170|4.170
M6 X 1|5.0|5.153|5.217
M7 X 1|6.0|6.153|6.217
M8 X 1.25|6.8|6.912|6.982
M9 X 1.25|7.8|7.912|7.982
M10 X 1.5|8.5|8.676|8.751
M11 X 1.5|9.5|9.676|9.751
M12 X 1.75|10.3|10.441|10.531
M14 X 2|12.0|12.210|12.310
M16 X 2|14.0|14.210|14.310
M18 X 2.5|15.5|15.744|15.854
M20 X 2.5|17.5|17.744|17.854
M22 X 2.5|19.5|19.744|19.854`);

const imperial = split(`
1/16W60|1.2|(1.230)
3/32W48|1.85|(1.914)
1/8W40|2.5|(2.591)
5/32W32|3.1|(3.214)
3/16W24|3.6|(3.774)
1/4W20|5.1|5.204
5/16W18|6.6|6.670
3/8W16|8.0|8.113
7/16W14|9.4|9.508
1/2W12|10.7|10.830
9/16W12|12.3|12.418
5/9W11|13.7|13.817
3/4W10|16.7|16.778
7/8W9|19.5|19.691
1W8|22.4|22.514
1 1/8W7|25.0|25.229
1 1/4W7|28.3|28.404
1 3/8W6|30.5|30.923
1 1/2W6|33.8|34.098
1 5/8W5|36.0|36.409
1 3/4W5|39.2|39.584
1 7/8W4 1/2|41.8|42.227
2W4 1/2|45.0|45.402`);

const squeezeA = split(`
M 1.0|0.25|0.86|0.88|=
M 1.1|0.25|0.96|0.98|=
M 1.2|0.25|1.06|1.08|-
M 1.4|0.3|1.24|1.25|-
M 1.6|0.35|1.41|1.43|-
M 1.7|0.35|1.51|1.53|-
M 1.8|0.35|1.61|1.63|=
M 2.0|0.4|1.78|1.80|=
M 2.2|0.45|1.95|1.98|-
M 2.3|0.4|2.08|2.10|-
M 2.5|0.45|-|2.28|-
M 2.6|0.45|=|2.38|=
M 3.0|0.5|=|2.75|2.78
M 3.0|0.35|=|2.83|=
M 3.5|0.6|-|3.20|3.23
M 4.0|0.7|-|3.65|3.69
M 4.0|0.5|-|3.75|3.78
M 5.0|0.8|=|4.60|4.64
M 5.0|0.5|=|4.75|4.78
M 6.0|1.0|=|5.50|5.55
M 6.0|0.75|-|5.63|5.66
M 6.0|0.5|-|5.75|5.78
M 6.0|1.0|-|6.50|6.55`);

const squeezeB = split(`
M 8|1.25|7.44|-
M 8|1.0|7.55|-
M 10|1.5|9.32|-
M 10|1.25|9.44|=
M 10|1.0|9.55|=
M 12|1.75|11.21|11.30
M 12|1.5|11.32|11.40
M 12|1.25|11.44|11.50
M 12|1.0|11.55|11.60
M 14|2.0|13.08|13.20`);

const grades = split(`
NO:2-56UNC|0|0|||||1.94||
NO:3-48|0|0|||||2.23||
NO:4-40||0|0||||2.50||
NO:5-40||0|0||||2.83||
NO:6-32||0|0||||3.07||
NO:8-32|||0|0|||4.73|3.77|
NO:10-24|||0|0|||4.24|4.30|
NO:12-24|||0|0|||4.90|4.96|
1/4-20||||0|0|||5.72|
5/18-18||||0|0|||7.24|
3/8-16||||0|0|||8.74|8.80
7/16-14|||||0|0||10.20|10.30
1/2-13|||||0|0||11.27|11.35
#|0|0|||||1.97||
NO:3-56|0|0|||||2.27||
NO:4-48||0|0||||2.56||
NO:5-44||0|0||||2.86||
#||0|0||||3.16||
NO:8-36|||0|0|||3.78||
NO:10-32|||0|0|||4.39|4.43|
NO:12-28|||0|0|||4.99|5.04|
1/4-28||||0|0||5.85|5.90|
5/16-24||||0|0||7.36|7.41|`);

const Sheet: React.FC<{ title: string; titlePad: string; lines: string[]; children: React.ReactNode }> = ({ title, titlePad, lines, children }) => (
  <section className="relative h-[620px] w-[410px] shrink-0 border border-[#f00] text-[9px] whitespace-nowrap text-[#f0f]">
    <span className="absolute -top-[11px] -left-[11px] h-[11px] w-[11px] border-t border-l border-[#f00]" />
    <span className="absolute -top-[11px] -right-[11px] h-[11px] w-[11px] border-t border-r border-[#f00]" />
    <div className="grid h-[62px] grid-cols-[153px_113px_1fr] border-b border-[#f00]">
      <div className="flex flex-col items-center justify-center gap-[10px] border-r border-[#f00] pt-0.5 pr-5 leading-[13px]">
        <span>港艺精密五金模具</span>
        <span>(深圳)有限公司</span>
      </div>
      <div className="flex flex-col border-r border-[#f00]">
        <span className="h-[21px] border-b border-[#f00] pl-0.5 leading-5">文件类型:</span>
        <span className="flex flex-1 items-center justify-center pr-2 text-[10px]">作业指导书</span>
      </div>
      <div className="grid grid-rows-[21px_20px_20px] leading-5">
        <span className="border-b border-[#f00] pl-0.5">文件编号:FM-SJ-00</span>
        <span className="border-b border-[#f00] pl-0.5 leading-[18px]">文件版本:A0</span>
        <span className="pl-0.5">页数:1/1</span>
      </div>
    </div>
    <h2 className={`pt-1 text-[12px] leading-4 ${titlePad}`}>{title}</h2>
    {lines.map((l, i) => (
      <p key={l} className="flex gap-1 pl-[14px] leading-4">
        <span className="w-[14px]">{['一.', '二.', '三.'][i]}</span>
        {l}
      </p>
    ))}
    {children}
  </section>
);

// outline of the knurled collar
const knurl = (r: number, depth: number, teeth: number) =>
  Array.from({ length: teeth * 2 }, (_, i) => {
    const a = (Math.PI * i) / teeth;
    const rr = i % 2 ? r : r + depth;
    return `${(41.5 + rr * Math.cos(a)).toFixed(1)},${(42.5 + rr * Math.sin(a)).toFixed(1)}`;
  }).join(' ');

const Teeth = ({ x }: { x: number }) => (
  <g>
    <rect x={x} y="14" width="6" height="57" stroke="#0f0" fill="#0f0" />
    {Array.from({ length: 19 }, (_, i) => (
      <path key={i} d={`M${x + 1} ${16.5 + i * 3}h5`} stroke="#212830" />
    ))}
  </g>
);

const Square = ({ x, y, c = '#fff' }: { x: number; y: number; c?: string }) => (
  <rect x={x - 1.5} y={y - 1.5} width="3" height="3" fill={c} stroke="none" />
);

const Views = () => (
  <svg viewBox="0 0 328 106" className="block h-[106px] w-[328px]" fill="none" strokeWidth="1" aria-label="铆钉视图">
    <defs>
      <pattern id="hy" width="3" height="3" patternUnits="userSpaceOnUse">
        <path d="M-1 1l2-2M0 3l3-3M2 4l2-2" stroke="#ff0" strokeWidth="1.200" />
      </pattern>
      <pattern id="hm" width="5" height="5" patternUnits="userSpaceOnUse">
        <path d="M-1 1l2-2M0 5l5-5M4 6l2-2" stroke="#f0f" strokeWidth=".9" />
      </pattern>
    </defs>
    <path d="M.5 106V.5h327V106M82.500 0v106M164.500 0v106M245.500 0v106" stroke="#fff" />

    <circle cx="41.500" cy="42.500" r="37" stroke="#0f0" />
    <polygon points={knurl(25.5, 2.5, 30)} stroke="#f00" />
    <polygon points={knurl(23.5, 2, 30)} stroke="#ff0" />
    <circle cx="41.500" cy="42.500" r="20" stroke="#f00" />
    <circle cx="41.500" cy="42.500" r="11.500" stroke="#0f0" />
    <circle cx="41.500" cy="42.500" r="8" stroke="#ff0" />
    <path d="M4 42.500h75M41.500 5v75" stroke="#0ff" />
    <path d="M33.500 39v54M49.500 39v54M33.500 91.500h16" stroke="#fff" />
    <Square x={36} y={91.5} />
    <Square x={47} y={91.5} />
    <path d="M4.500 43v62M78.500 43v62M4.500 101.500h74" stroke="#f0f" />
    <Square x={8} y={101.5} c="#f0f" />
    <Square x={74} y={101.5} c="#f0f" />

    <path d="M104 23h39v6h-39zM104 58h39v22h-20v-8h-6v-8h-13z" fill="url(#hm)" stroke="none" />
    <path d="M117 27h24v30h-24z" fill="url(#hy)" stroke="#ff0" />
    <path d="M117 29h-8v27h8M104.500 29v28M104.500 23l8 3 31-2" stroke="#f0f" />
    <path d="M104.500 22.500v41h12.500V71M104.500 22.500h12.500M123.500 22V5.500h17l3 2V79.500h-20V71M140.500 6v18" stroke="#0f0" />
    <path d="M118 14h5v8h-5z" fill="#0f0" />
    <path d="M96 42.500h62" stroke="#0ff" />
    <path d="M93 22.500h11M93 63.500h11M96.500 22v42M104.500 64v22M117.500 72v14M94 84.500h34M123.500 80v14M143.500 79v16M123.500 92.500h20" stroke="#fff" />
    <Square x={96.5} y={26.5} />
    <Square x={96.5} y={58.5} />
    <Square x={101} y={84.5} />
    <Square x={121} y={84.5} />
    <Square x={127} y={92.5} />
    <Square x={140} y={92.5} />

    <Teeth x={198} />
    <path d="M204.500 5.500h19v74h-19zM223.500 5.500l2 2v70l-2 2M198 26.500l-11.500-4v41l11.500-5" stroke="#0f0" />
    <path d="M179 42.500h61" stroke="#0ff" />
    <path d="M186.500 63v23M204.500 73v13M186.500 84.500h18" stroke="#fff" />
    <Square x={190.5} y={84.5} />
    <Square x={200.5} y={84.5} />

    <Teeth x={280} />
    <path d="M286.500 5.500h19v74h-19zM305.500 5.500l2 2v70l-2 2M280 24.500l-5-2h-6.500v41h4l7.500-3M272.500 22.500v41" stroke="#0f0" />
    <path d="M260 42.500h61" stroke="#0ff" />
    <path d="M268.500 55v40M286.500 74v21M268.500 93.500h18" stroke="#fff" />
    <Square x={272.5} y={93.5} />
    <Square x={282.5} y={93.5} />

    <g fill="#e01010" fontFamily="Liberation Sans" fontSize="7" textAnchor="middle">
      <text x="41.500" y="90">ØD</text>
      <text x="41.500" y="100">ØD1</text>
      <text x="-43" y="95" transform="rotate(-90)">ØD2</text>
      <text x="110.500" y="83">A1</text>
      <text x="133.500" y="91">T</text>
      <text x="195.500" y="83">A2</text>
      <text x="277.500" y="84">A3</text>
      <text x="277.500" y="91">A4</text>
    </g>
  </svg>
);

const Stack = ({ v, w }: { v: string; w?: string }) => (
  <>
    {v.split(',').map((s, i) => (
      <span key={i} className="flex h-[9px] items-center justify-center">
        <Val v={s} rule="bg-[#f00]" w={w} />
      </span>
    ))}
  </>
);

const parts = [
  ['h-[20px]', 'M2', '0.4', '=,20252', '=,', '=,=', '=,=', 'A1,A3', '0.76,1.37', '6.6', '4.22', '1.75'],
  ['h-[41px]', 'M3', '0.5', '20552,20652,20752', '50552,50652,=', '60552,60652,60752', '70552,70652,70752', 'A1,A2,A3', '0.76,0.97,1.37', '6.6,,', '4.22,,', '1.75,,'],
  ['h-[41px]', 'M4', '0.7', '20952,21052,21152,21252', '50952,51052,51152,-', '60952,61052,61152,-', '70952,71052,71152,-', 'A1,A2,A3,A4', '0.76,1.37,1.37,2.21', '8.6,,,', '5.38,,,', '2.35,,,'],
  ['h-[41px]', 'M5', '0.8', '-,21452,21552,21652', '=,=,-,-', '=,=,61552,-', '=,=,71552,-', 'A1,A2,A3,A4', '0.76,1.37,1.37,2.21', '8.9,,,', '6.38,,,', '2.35,,,'],
];

const SIZE = "font-['Liberation_Sans'] text-[10px]";
const HEAD = "font-['Liberation_Mono'] text-[8px]";

const PartTable = () => (
  <table className={`w-[328px] table-fixed border-collapse text-[10px] leading-[9px] whitespace-nowrap text-[#f00] [&_td]:border [&_td]:border-white [&_td]:p-0 [&_td]:text-center [&_th]:border [&_th]:border-white [&_th]:p-0 [&_th]:font-normal ${CAD}`}>
    <colgroup>
      <col className="w-[27px]" />
      <col className="w-[28px]" />
      <col className="w-[55px]" />
      <col className="w-[27px]" />
      <col className="w-[27px]" />
      <col className="w-[28px]" />
      <col className="w-[27px]" />
      <col className="w-[28px]" />
      <col className="w-[27px]" />
      <col className="w-[27px]" />
      <col className="w-[26px]" />
    </colgroup>
    <tbody>
      <tr className={`h-[21px] ${HEAD}`}>
        <th colSpan={2}>
          NOMINAL
          <br />
          SIZE
        </th>
        <th colSpan={4}>
          <span className="flex justify-center gap-4">
            <span>PART</span>
            <span>NUMBER</span>
            <span>2</span>
          </span>
        </th>
        <th rowSpan={2} colSpan={2}>
          <span className="flex items-center justify-center gap-1">
            A
            <span className="text-left text-[10px]">
              +0
              <br />
              -0.13
            </span>
          </span>
        </th>
        {['ØD1', 'ØD2', 'T'].map((h) => (
          <th key={h} rowSpan={2} className="leading-[13px]">
            <span className={SIZE}>{h}</span>
            <br />
            MAX
          </th>
        ))}
      </tr>
      <tr className="h-[20px]">
        <th className={SIZE}>ØD</th>
        <th className={SIZE}>3</th>
        {['A', 'B', 'C', 'D'].map((t) => (
          <th key={t} className={HEAD}>
            TYPE
            <br />
            {t}
          </th>
        ))}
      </tr>
      {parts.map(([h, ...cells]) => (
        <tr key={cells[0]} className={h}>
          {cells.map((c, i) => (
            <td key={i} className={i < 2 ? SIZE : ''}>
              <Stack v={c} w={i === 2 ? 'w-[41px]' : 'w-[25px]'} />
            </td>
          ))}
        </tr>
      ))}
      <tr className="h-[10px]">
        <td rowSpan={2} className={SIZE}>
          M6
        </td>
        <td rowSpan={2} className={SIZE}>
          1.0
        </td>
        {['21952', '=', '=', '=', '=', '1.48', '1.3', '8.72', '3.1'].map((v, i) => (
          <td key={i}>
            <Stack v={v} />
          </td>
        ))}
      </tr>
      <tr className="h-[31px] align-top">
        {['22152', '-', '62152', '72152', '-', '1.37', '11.3', '', '4.35'].map((v, i) => (
          <td key={i} className="pt-1!">
            <Stack v={v} />
          </td>
        ))}
      </tr>
    </tbody>
  </table>
);

const ROWS9 = '[&>tr]:h-[9px] [&>tr:nth-child(5n+1)]:h-[10px] [&>tr:nth-child(5n+4)]:h-[10px]';
const ROWS8 = '[&>tr]:h-[8px] [&>tr:nth-child(5n+3)]:h-[9px]';
const ROWS12 = '[&>tr]:h-[12px] [&>tr:nth-child(5n)]:h-[13px]';

const MetricTable = () => (
  <table className={`w-[154px] text-[#00dc20] ${TABLE} ${CAD}`}>
    <colgroup>
      <col className="w-[49px]" />
      <col className="w-[35px]" />
      <col className="w-[34px]" />
      <col className="w-[35px]" />
    </colgroup>
    <thead className="text-[#f01010]">
      <tr className="h-[14px]">
        <th colSpan={4} className="text-[10px]">公&ensp;制&ensp;螺&ensp;纹</th>
      </tr>
      <tr className="h-[10px]">
        <th rowSpan={2} className="text-[10px]">公制粗牙</th>
        <th colSpan={3} className="text-[#d01818]">底孔直径&ensp;(max)</th>
      </tr>
      <tr className="h-[9px] text-[#d01818]">
        <th>2级用</th>
        <th>2&ensp;级</th>
        <th>3&ensp;级</th>
      </tr>
    </thead>
    <tbody className={ROWS9}>
      <Rows rows={metric} rule="bg-[#0f0]" cell="pl-[7px]! [&>span]:-ml-[3px]" first="pl-1!" />
    </tbody>
  </table>
);

const ImperialTable = () => (
  <table className={`w-[145px] text-[#dc00dc] ${TABLE} ${CAD}`}>
    <colgroup>
      <col className="w-[54px]" />
      <col className="w-[45px]" />
      <col className="w-[45px]" />
    </colgroup>
    <thead className="text-[#f4f410]">
      <tr className="h-[14px]">
        <th colSpan={3} className="text-[10px]">英&ensp;制&ensp;螺&ensp;纹</th>
      </tr>
      <tr className="h-[10px]">
        <th rowSpan={2} className="text-[10px]">英&emsp;制</th>
        <th colSpan={2} className="text-[#cccc18]">底孔直径&ensp;(max)</th>
      </tr>
      <tr className="h-[9px] text-[#cccc18]">
        <th>2&emsp;级</th>
        <th>3&emsp;级</th>
      </tr>
    </thead>
    <tbody className={ROWS9}>
      <Rows rows={imperial} rule="bg-[#0f0]" cell="pl-[12px]!" first="pl-[11px]!" />
    </tbody>
  </table>
);

const SqueezeTables = () => (
  <div className="flex flex-col gap-[7px]">
    <table className={`w-[154px] text-center text-[#e4e414] ${TABLE} ${CAD}`}>
      <colgroup>
        <col className="w-[31px]" />
        <col className="w-[30px]" />
        <col className="w-[31px]" />
        <col className="w-[31px]" />
        <col className="w-[30px]" />
      </colgroup>
      <thead className="text-[#f00]">
        <tr className="h-[12px] text-[10px]">
          <th colSpan={2}>(R-S)&ensp;(R-C)</th>
          <th colSpan={3}>等&emsp;&ensp;级</th>
        </tr>
        <tr className="h-[8px] text-[7px] leading-[7px] text-[#d01818]">
          <th>挤牙规格</th>
          <th>牙 距</th>
          <th>C3.C4</th>
          <th>C5.C6</th>
          <th>C7.C8</th>
        </tr>
      </thead>
      <tbody className={ROWS8}>
        <Rows rows={squeezeA} rule="bg-[#ff0]" cell="leading-[7px]" />
      </tbody>
    </table>
    <table className={`w-[154px] text-center text-[#e4e414] ${TABLE} ${CAD}`}>
      <colgroup>
        <col className="w-[43px]" />
        <col className="w-[37px]" />
        <col className="w-[36px]" />
        <col className="w-[37px]" />
      </colgroup>
      <thead className="text-[#f00]">
        <tr className="h-[13px] text-[10px]">
          <th colSpan={2}>(&ensp;R&ensp;-&ensp;Z&ensp;)</th>
          <th colSpan={2}>等&emsp;&ensp;级</th>
        </tr>
        <tr className="h-[8px] text-[7px] leading-[7px] text-[#d01818]">
          <th>挤牙规格</th>
          <th>牙 距</th>
          <th>C7.C8</th>
          <th>C9.C10</th>
        </tr>
      </thead>
      <tbody className={ROWS8}>
        <Rows rows={squeezeB} rule="bg-[#ff0]" cell="leading-[7px]" />
      </tbody>
    </table>
  </div>
);

const GradeTable = () => (
  <table className={`w-[224px] shrink-0 text-center text-[#14d4d4] ${TABLE} ${CAD}`}>
    <colgroup>
      <col className="w-[31px]" />
      <col className="w-[16px]" />
      <col className="w-[17px]" />
      <col className="w-[16px]" />
      <col className="w-[17px]" />
      <col className="w-[16px]" />
      <col className="w-[16px]" />
      <col className="w-[31px]" />
      <col className="w-[31px]" />
      <col className="w-[32px]" />
    </colgroup>
    <thead className="text-[#00d820]">
      <tr className="h-[12px]">
        <th rowSpan={3} className="text-[7px]">挤牙规格</th>
        <th colSpan={6}>等&ensp;级&ensp;范&ensp;围</th>
        <th colSpan={3}>底&ensp;孔&ensp;大&ensp;小</th>
      </tr>
      <tr className="h-[12px]">
        <th colSpan={6}>R&ensp;-&ensp;S</th>
        <th>D-0.55P</th>
        <th>D-0.5 P</th>
        <th>D-0.45P</th>
      </tr>
      <tr className="h-[13px] text-[#14d4d4]">
        {['C4', 'C5', 'C6', 'C7', 'C8', 'C9', 'C4~C6', 'C7.C8', 'C9'].map((c) => (
          <th key={c}>{c}</th>
        ))}
      </tr>
    </thead>
    <tbody className={ROWS12}>
      {grades.map((r, i) => (
        <tr key={i}>
          {r.map((v, j) => (
            <td key={j} className={j === 0 ? (v.startsWith('NO') ? 'pl-0.5! text-left text-[5px]' : 'pl-[3px]! text-left') : ''}>
              {v === '#' ? <span className="block h-[5px] w-6 bg-[#0ff]" /> : v}
            </td>
          ))}
        </tr>
      ))}
    </tbody>
  </table>
);

const ViewCube = () => (
  <div className="absolute top-2.5 right-3 flex w-[90px] flex-col items-center text-[13px] leading-4 text-[#9fa3a8]">
    <svg viewBox="0 0 90 90" className="absolute top-0 left-0 h-[90px] w-[90px]" fill="none" aria-hidden="true">
      <circle cx="45" cy="45" r="37" stroke="#8c949c" strokeOpacity=".4" strokeWidth="6" />
      <path d="M28 28h34v34H28z" fill="#b4b6b8" stroke="#c9cbcd" />
      <path d="M34 34h22v22H34z" fill="#a0a4a8" />
      <path d="M44 38v13M50 42h3M52 49h3" stroke="#555" strokeWidth="1.500" />
    </svg>
    <span className="relative">北</span>
    <span className="relative flex w-full justify-between py-[21px]">
      <span>西</span>
      <span>东</span>
    </span>
    <span className="relative">南</span>
    <button type="button" className="mt-3 flex h-[18px] w-12 items-center justify-center gap-1.5 rounded border border-[#9a9ca4] bg-[#7e8189] text-[11px] text-[#d0d2d8]">
      WCS
      <svg viewBox="0 0 10 10" className="h-2.5 w-2.5" fill="none" stroke="currentColor" aria-hidden="true">
        <path d="M1 3h8L5 7z" />
      </svg>
    </button>
  </div>
);

const Canvas = () => (
  <div className="relative min-h-0 flex-1 overflow-hidden bg-[#212830]">
    <div className="absolute top-[21px] left-[18px] flex gap-[25px]">
      <Sheet
        title="（金德）铆钉底孔标准作业图"
        titlePad="pl-[131px]"
        lines={['目的：统一铆钉底孔标准图的设计规范', '适用范围：港艺精密五金模具(深圳)有限公司', '铆钉底孔编号标准图作业规范:']}
      >
        <div className="pt-[9px] pl-[38px]">
          <Views />
          <PartTable />
        </div>
      </Sheet>
      <Sheet
        title="（金德）攻牙切削底孔标准作业表"
        titlePad="pl-[134px]"
        lines={['目的：统一攻牙(切削)底孔标准设计规范', '适用范围：港艺精密五金模具(深圳)有限公司', '攻牙切削底孔编号标准作业规范:']}
      >
        <div className="flex items-start gap-[9px] pt-[3px] pl-[50px]">
          <MetricTable />
          <ImperialTable />
        </div>
      </Sheet>
      <Sheet
        title="（金德）攻牙挤牙底孔标准作业表"
        titlePad="pl-[134px]"
        lines={['目的：统一攻牙(挤牙)底孔标准设计规范', '适用范围：港艺精密五金模具(深圳)有限公司', '攻牙挤牙底孔编号标准作业规范:']}
      >
        <div className="flex items-start gap-[9px] pt-[11px] pl-[8px]">
          <SqueezeTables />
          <GradeTable />
        </div>
      </Sheet>
    </div>
    <button type="button" className="absolute top-1 left-[3px] text-[12px] leading-[18px] text-white">
      [−][俯视][二维线框]
    </button>
    <svg viewBox="0 0 80 90" className="absolute top-[390px] left-[96px] h-[90px] w-[80px]" fill="none" stroke="#fff" aria-hidden="true">
      <path d="M6.500 27v50M2.500 72.500h9v9h-9zM12 77.500h45M8 10l6.500 6M21 10l-6.500 6v7M61 62l12 12M73 62L61 74" />
    </svg>
    <ViewCube />
  </div>
);

const UP = 'M1 7l4-4 4 4';
const DOWN = 'M1 3l4 4 4-4';
const LEFT = 'M7 1L3 5l4 4';
const RIGHT = 'M3 1l4 4-4 4';

const Workspace = () => (
  <main className="flex min-h-0 flex-1 gap-1 overflow-hidden bg-[#565656]">
    <div className="flex w-[25px] shrink-0 flex-col self-start border border-[#363636] bg-[#5d5d5d]">
      <SideGrip />
      {drawTools.map((t) => (
        <SideTool key={t} name={t} />
      ))}
      <button type="button" className="flex h-[22px] items-center justify-center text-[19px] leading-none font-semibold text-white">
        A
      </button>
      <SideTool name="addSel" />
    </div>
    <div className="flex min-w-0 flex-1 flex-col pb-1">
      <div className="flex min-h-0 flex-1">
        <Canvas />
        <div className="flex w-4 shrink-0 flex-col items-center bg-[#f0f0f0] pt-1 pb-0.5 text-[#555]">
          <Chevron d={UP} />
          <span className="mt-0.5 h-[17px] w-full bg-[#cdcdcd]" />
          <Chevron d={DOWN} className="mt-auto" />
        </div>
      </div>
      <div className="flex h-4 shrink-0 items-center bg-[#f0f0f0] pr-5 pl-1 text-[#555]">
        <Chevron d={LEFT} />
        <span className="ml-[3px] h-full w-[17px] bg-[#cdcdcd]" />
        <Chevron d={RIGHT} className="ml-auto" />
      </div>
    </div>
    <div className="mr-[3px] flex w-[25px] shrink-0 flex-col gap-px">
      <div className="flex shrink-0 flex-col border border-[#363636] bg-[#5d5d5d]">
        <SideGrip />
        {editTools.map((t) => (
          <SideTool key={t} name={t} />
        ))}
      </div>
      <div className="flex min-h-0 flex-1 flex-col overflow-hidden border border-b-0 border-[#363636] bg-[#5d5d5d]">
        <SideGrip />
        {orderTools.map((t) => (
          <SideTool key={t} name={t} />
        ))}
      </div>
    </div>
  </main>
);

/* ---------- command line and status bar ---------- */

const CommandLine = () => (
  <div className="flex h-[57px] shrink-0 border-t border-[#888] text-[12px] text-black">
    <div className="flex w-[22px] shrink-0 flex-col items-center justify-around bg-linear-to-b from-[#7a7a7a] to-[#333] pt-0.5">
      <span className="h-[5px] w-[17px] bg-[radial-gradient(#ccc_1px,transparent_1px)] bg-[size:3px_3px]" />
      <button type="button" aria-label="close">
        <svg viewBox="0 0 10 10" className="h-2.5 w-2.5" stroke="#fff" strokeWidth="2" aria-hidden="true">
          <path d="M1 1l8 8M9 1L1 9" />
        </svg>
      </button>
      <button type="button" aria-label="customize">
        <svg viewBox="0 0 16 16" className="h-4 w-4" aria-hidden="true">
          <path d="M1 4l3 1 1-1-1-3c3-1 5 1 4.500 4L15 12c1 1-1 3-2 2L6 8C3 9 0 7 1 4z" fill="#f0f0f0" />
        </svg>
      </button>
    </div>
    <div className="flex min-w-0 flex-1 flex-col font-['Liberation_Mono','Noto_Sans_CJK_SC',monospace]">
      <div className="flex h-[34px] flex-col border-b border-[#777] bg-[#c8c8c8] pt-px pl-[3px] text-[12px] leading-[15px]">
        <p>命令: '_pan</p>
        <p>按 Esc 或 Enter 键退出，或单击右键显示快捷菜单。</p>
      </div>
      <label className="flex flex-1 items-center bg-white pl-1">
        <Ico>{icons.hand}</Ico>
        <Tri color="border-t-[#777]" />
        <input aria-label="命令" defaultValue="PAN" className="ml-[7px] flex-1 text-[12px] font-bold outline-none" />
      </label>
    </div>
  </div>
);

const SB = 'flex h-[25px] shrink-0 items-center justify-around border border-[#7a7a7a] bg-[#525252]';

const S: React.FC<{ children: React.ReactNode; label: string; color?: string }> = ({ children, label, color = '#c8c8c8' }) => (
  <button type="button" aria-label={label}>
    <svg viewBox="0 0 18 18" className="h-[18px] w-[18px]" fill="none" stroke={color} strokeWidth="1.400" aria-hidden="true">
      {children}
    </svg>
  </button>
);

const Person = ({ color, extra }: { color: string; extra?: React.ReactNode }) => (
  <g stroke={color}>
    <path d="M9 1l2.500 8 5.500 7-5-.5L9 12l-3 3.500-5 .5 5.500-7z" fill={color} strokeWidth=".5" />
    {extra}
  </g>
);

const ACTIVE = '#2a93ff';

const StatusBar = () => (
  <footer className="flex h-[29px] shrink-0 items-start bg-[#383838] pt-px pl-2 text-[12px] text-[#b8b8b8]">
    <button
      type="button"
      className="h-[17px] w-[54px] bg-linear-to-b from-[#555] to-[#999] leading-4 font-bold text-white [clip-path:polygon(0_0,100%_0,92%_45%,84%_100%,18%_100%,12%_60%)]"
    >
      模型
    </button>
    {['Layout1', 'Layout2'].map((l) => (
      <button
        key={l}
        type="button"
        className="h-[17px] w-[67px] bg-linear-to-b from-[#484848] to-[#5e5e5e] leading-4 [clip-path:polygon(0_0,100%_0,92%_45%,86%_100%,14%_100%,8%_60%)]"
      >
        {l}
      </button>
    ))}
    <button type="button" aria-label="新建布局" className="flex h-4 w-6 items-center justify-center rounded-tl-lg rounded-br-lg bg-[#525252]">
      <svg viewBox="0 0 9 9" className="h-[9px] w-[9px]" stroke="#ccc" strokeWidth="2" aria-hidden="true">
        <path d="M4.500 0v9M0 4.500h9" />
      </svg>
    </button>

    <div className="ml-auto flex">
      <button type="button" className={`${SB} w-[29px] whitespace-nowrap text-white`}>
        模型
      </button>
      <div className={`${SB} w-[66px]`}>
        <S label="grid">
          <path d="M4 2v14M7.500 2v14M11 2v14M14.500 2v14M2 5h15M2 9h15M2 13h15" strokeWidth="1" />
        </S>
        <S label="snap">
          <path d="M2 3h15M2 7h15M2 11h15M2 15h15" strokeDasharray="1.500 2" />
        </S>
        <Tri />
      </div>
      <div className={`${SB} w-[104px]`}>
        <S label="ortho" color={ACTIVE}>
          <path d="M4 2v13h13M4 10h5v5" strokeWidth="1.800" />
        </S>
        <S label="polar">
          <circle cx="8.500" cy="9" r="6.500" />
          <path d="M16 9H8.500L14 3" />
        </S>
        <Tri />
        <S label="isodraft">
          <path d="M2 1l14 15M9 1v16M12 12v4" />
        </S>
        <Tri />
      </div>
      <div className={`${SB} w-[65px]`}>
        <S label="otrack" color={ACTIVE}>
          <path d="M16 15H2L15 3" strokeWidth="1.800" />
          <circle cx="8" cy="10" r="1.500" fill={ACTIVE} />
        </S>
        <S label="osnap" color={ACTIVE}>
          <path d="M4 4h12v12H4z" strokeWidth="1.800" />
          <path d="M1 1h5v5H1z" fill="#0c0" stroke="#031" />
        </S>
        <Tri />
      </div>
      <div className={`${SB} w-[108px]`}>
        <S label="annotation" color={ACTIVE}>
          <Person color={ACTIVE} extra={<circle cx="13" cy="4" r="2.500" />} />
        </S>
        <S label="autoscale">
          <Person color="#c8c8c8" extra={<path d="M14 1l-2 4h3l-2 3" />} />
        </S>
        <S label="scale">
          <Person color="#c8c8c8" />
        </S>
        <button type="button" className="text-white">
          1:1
        </button>
        <Tri />
      </div>
      <div className={`${SB} w-[41px]`}>
        <S label="workspace">
          <circle cx="9" cy="9" r="4" strokeWidth="3" />
          <circle cx="9" cy="9" r="6" strokeWidth="2" strokeDasharray="2.300 2.400" />
        </S>
        <Tri />
      </div>
      <div className={`${SB} w-[26px]`}>
        <S label="monitor">
          <path d="M9 2v14M2 9h14" strokeWidth="2" />
        </S>
      </div>
      <div className={`${SB} w-[27px]`}>
        <S label="units">
          <path d="M2 2h6v6H2zM9 10l4 6H5z" />
          <circle cx="13.500" cy="6.500" r="3" />
        </S>
      </div>
      <div className={`${SB} w-[27px]`}>
        <S label="quick properties" color={ACTIVE}>
          <circle cx="9" cy="9" r="6.500" fill="#0d57b0" />
        </S>
      </div>
      <div className={`${SB} w-[26px]`}>
        <S label="hardware">
          <circle cx="9" cy="9" r="6" fill="#3d8fe0" />
          <path d="M8 12l3 3 5-6" stroke="#5fd13a" strokeWidth="2" />
        </S>
      </div>
      <div className={`${SB} w-[26px]`}>
        <S label="isolate">
          <path d="M3 3h12v12H3z" fill="#eee" />
          <path d="M12 9l4 8H8z" fill="#f28a2a" stroke="none" />
        </S>
      </div>
      <div className={`${SB} w-[26px]`}>
        <S label="clean screen">
          <path d="M2 3h14v12H2zM10 8l4-3M8 11l-4 3" />
        </S>
      </div>
      <div className={`${SB} w-[26px]`}>
        <S label="customization">
          <path d="M2 4h14M2 9h14M2 14h14" strokeWidth="2" />
        </S>
      </div>
    </div>
  </footer>
);

const Watermark = () => (
  <div className="pointer-events-none absolute right-1 bottom-0.5 flex items-end gap-1">
    <svg viewBox="0 0 36 32" className="h-8 w-9" fill="none" aria-hidden="true">
      <g stroke="#f0f0f0" strokeWidth="5">
        <path d="M3 2c9 6 11 20 3 28M33 2c-9 6-11 20-3 28M10 15h16M15 15v15M21 15v15" />
      </g>
      <g stroke="#c9252b">
        <path d="M3 2c9 6 11 20 3 28M33 2c-9 6-11 20-3 28" strokeWidth="3.200" />
        <path d="M10 15h16" strokeWidth="2.500" />
        <path d="M15 16v13M21 16v13" strokeWidth="2.200" />
      </g>
    </svg>
    <div className="flex flex-col">
      <span className="font-['Noto_Sans_CJK_TC',sans-serif] text-[21px] leading-[22px] font-medium text-[#f08c28] [paint-order:stroke] [-webkit-text-stroke:2px_#fff3dd]">
        華印社區
      </span>
      <span className="font-['Liberation_Sans'] text-[11px] leading-[11px] font-bold text-[#444] [paint-order:stroke] [-webkit-text-stroke:2px_#ddd]">
        www.52cnp.com
      </span>
    </div>
  </div>
);

export default function App() {
  return (
    <div className={`relative flex h-screen flex-col overflow-hidden bg-[#e6e6e6] pt-0.5 pr-1.5 pb-0.5 pl-1 ${UI}`}>
      <span className="absolute top-0 left-[211px] h-0.5 w-[77px] bg-[#dada72]" />
      <span className="absolute top-[3px] left-0 h-[15px] w-1 bg-[#ecd890]" />
      <span className="absolute top-[23px] left-0 h-[23px] w-1 bg-[#0a5cad]" />
      <span className="absolute top-[28px] right-0 h-4 w-1.5 rounded-r-full bg-[#0a5cad]" />
      <div className="relative flex min-h-0 flex-1 flex-col border-t border-[#999] bg-[#383838]">
        <TitleBar />
        <MenuBar />
        <AppButton />
        <FileTabs />
        <Toolbars />
        <Workspace />
        <CommandLine />
        <StatusBar />
      </div>
      <Watermark />
    </div>
  );
}
